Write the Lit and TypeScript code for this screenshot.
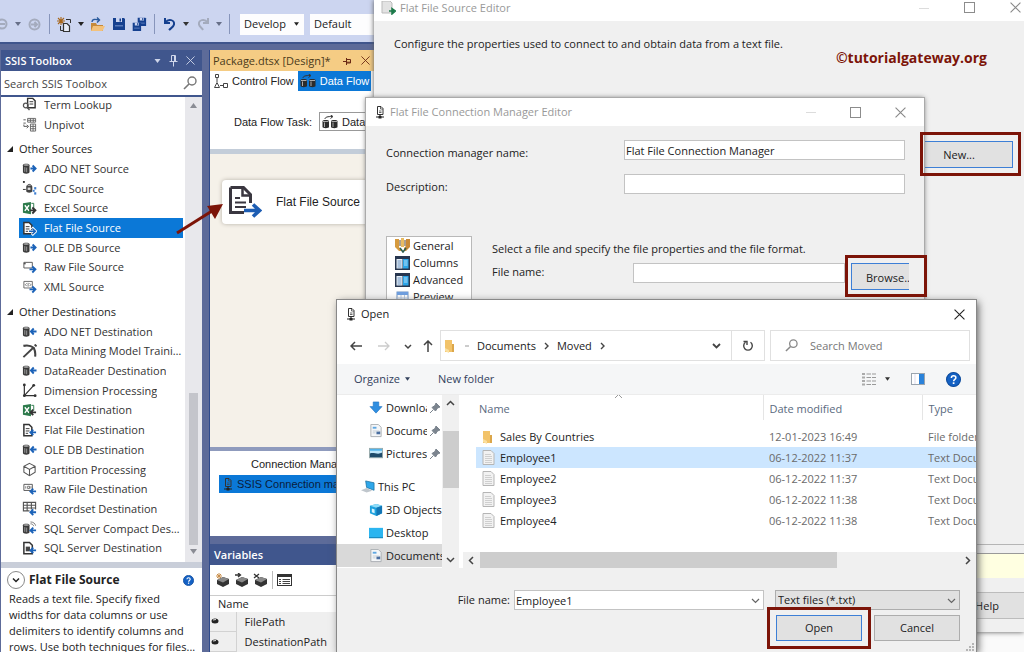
import { LitElement, html, svg, css } from "lit";
import { customElement } from "lit/decorators.js";
import { classMap } from "lit/directives/class-map.js";

const base = css`
  * { box-sizing: border-box; }
  :host {
    box-sizing: border-box;
    display: flex;
    flex-direction: column;
    font-family: "Open Sans", "Noto Sans", sans-serif;
    font-size: 11px;
    line-height: 16px;
    color: #222;
  }
  svg { display: block; flex: none; }
  button, input, select { font: inherit; color: inherit; margin: 0; border-radius: 0; }
  button { padding: 0; border: 0; background: none; }
  input { min-width: 0; padding: 0 1px; border: 1px solid #c3c3c3; background: #fff; outline: 0; }
  p, h1, h2, ul { margin: 0; padding: 0; font: inherit; list-style: none; }
  .push { flex: 1 1 0; min-width: 0; }
  .push-button { border: 1px solid #adadad; background: #e1e1e1; text-align: center; }
  .primary { border-color: #3d7fd6; }
  .controls { display: flex; align-items: center; }
`;

type Art = ReturnType<typeof svg>;
const icon = (w: number, h: number, art: Art | Art[], vw = w, vh = h) =>
  html`<svg width=${w} height=${h} viewBox="0 0 ${vw} ${vh}" fill="none" aria-hidden="true">${art}</svg>`;

/* ---- shared glyphs ---- */
const cross = (color: string, size = 10) =>
  icon(size, size, svg`<path d="M.5 .5L9.5 9.5M9.5 .5L.5 9.5" stroke=${color}/>`, 10, 10);
const square = () => icon(11, 11, svg`<rect x=".5" y=".5" width="10" height="10" stroke="#8c8c8c"/>`);
const dash = () => icon(10, 10, svg`<path d="M0 5.5H10" stroke="#dcdcdc"/>`);
const caret = (color: string, w = 6) => icon(w, 4, svg`<path d="M0 0H6L3 4Z" fill=${color}/>`, 6, 4);
const chevron = (color = "#444", turn = 0, width = 1.2) =>
  icon(9, 9, svg`<path d="M1 3L4.500 6.500L8 3" stroke=${color} stroke-width=${width} transform="rotate(${turn} 4.500 4.500)"/>`);
const lens = (color: string, size = 14) =>
  icon(size, size, svg`<circle cx="9" cy="5" r="4" stroke=${color} stroke-width="1.400"/><path d="M6 8L1 13" stroke=${color} stroke-width="1.600"/>`, 14, 14);
const serverFile = () =>
  icon(10, 13, svg`<path d="M2.500 .5H6L8 2.500V8.500H2.500Z" stroke="#333"/><path d="M5.500 1V3H8M4 5H6.500M4 6.500H6.500" stroke="#444" stroke-width=".8"/><path d="M1 11H9M5 8.500V12" stroke="#222" stroke-width="1.200"/><rect x="3.500" y="10" width="3" height="2.500" fill="#222"/>`);
const helpBadge = (size: number) =>
  html`<svg width=${size} height=${size} viewBox="0 0 14 14" fill="none" aria-hidden="true"><circle cx="7" cy="7" r="6.500" fill="#1461c4" stroke="#0c4a9c"/><path d="M5 5.500C5 2.800 9.200 2.900 9.200 5.400C9.200 7 7.100 6.900 7.100 8.700" stroke="#fff" stroke-width="1.400"/><rect x="6.300" y="9.600" width="1.600" height="1.600" fill="#fff"/></svg>`;

/* ---- toolbox item glyphs, drawn on a 16 unit grid ---- */
const arrowRight = (c: string) => svg`<path d="M8 10H14M11 7L14.300 10L11 13.300" stroke=${c} stroke-width="2"/>`;
const arrowLeft = (c: string) => svg`<path d="M9.500 10H15M12 7L9 10L12 13" stroke=${c} stroke-width="2"/>`;
const dbArrowRight = svg`<path d="M9 8H14M11.300 4.800L14.500 8L11.300 11.200" stroke="#1b62b8" stroke-width="2"/>`;
const dbArrowLeft = svg`<path d="M10 8H15.500M12.500 4.800L9.500 8L12.500 11.200" stroke="#1b62b8" stroke-width="2"/>`;
const drum = svg`<path d="M1 4.500C1 2.500 8 2.500 8 4.500V12C8 14 1 14 1 12Z" fill="#3a3a3a"/><path d="M3 6.500V11.500M5 7V12" stroke="#bbb" stroke-width=".8"/><ellipse cx="4.500" cy="4.300" rx="3" ry="1" fill="#999"/>`;
const page = svg`<path d="M2 1.500H7.500L10.500 4.500V13.500H2Z" fill="#fff" stroke="#333" stroke-width="1.600"/><path d="M4 6H8M4 8.500H8M4 11H6.500" stroke="#333"/>`;
const excel = svg`<path d="M1 2.500L9.500 1V14L1 12.500Z" fill="#2c7a4b"/><path d="M3 4.500L7.500 10.500M7.500 4.500L3 10.500" stroke="#fff" stroke-width="1.500"/><path d="M10 2.500H12.500V8" stroke="#2c7a4b"/>`;
const BLUE = "#1b62b8";
const glyphs: Record<string, Art> = {
  lookup: svg`<path d="M6 1.500H11.500L14 4V11.500H6Z" stroke="#333" stroke-width="1.500"/><path d="M8 5H12M8 7.500H12" stroke="#333"/><circle cx="4" cy="9" r="2.500" stroke="#555" stroke-width="1.300"/><path d="M5.500 11L8 14" stroke="#555" stroke-width="1.500"/>`,
  unpivot: svg`<path d="M6 1.500H14.500V5.500H6ZM9 1.500V5.500M12 1.500V5.500M6 3.500H14.500" stroke="#666"/><path d="M9 7.500H14.500V15H9ZM9 10H14.500M9 12.500H14.500M11.800 7.500V15" stroke="#666"/><path d="M1.500 3H4M1.500 6.500H4M2 8V10H6M5 8.500L7 10L5 12" stroke="#555"/>`,
  dbSource: svg`${drum}${dbArrowRight}`,
  dbDest: svg`${drum}${dbArrowLeft}`,
  cdc: svg`<rect x="1" y="0" width="2" height="2" fill="#333"/><path d="M1 9H4" stroke="#333"/><path d="M5.500 5.500C5.500 3 10 3 10 5.500" stroke="#333"/><path d="M4.500 6C4.500 4.500 11 4.500 11 6V11C11 13 4.500 13 4.500 11Z" fill="#444"/><rect x="6" y="7" width="3" height="2.500" fill="#ddd"/><rect x="13" y="6.500" width="2.200" height="2.500" fill="#3f7fd0"/><rect x="11.500" y="9.500" width="2" height="2" fill="#3f7fd0"/><rect x="13" y="12" width="2.200" height="2.500" fill="#3f7fd0"/>`,
  excelSource: svg`${excel}${arrowRight("#333")}`,
  excelDest: svg`${excel}${arrowLeft("#333")}`,
  fileSource: svg`${page}<path d="M7 11H13M10.500 7L14.500 11L10.500 15" stroke="#fff" stroke-width="3"/><path d="M7.500 11H14M11 8L14.300 11L11 14" stroke=${BLUE} stroke-width="1.500"/>`,
  fileDest: svg`${page}${arrowLeft(BLUE)}`,
  rawSource: svg`<path d="M2 2.500H11V8.500H2Z" stroke="#555"/><path d="M4 4H2" stroke="#222"/>${arrowRight(BLUE)}`,
  rawDest: svg`<path d="M2 2.500H11V9H2Z" stroke="#555"/><path d="M4 4.500V7M6 4.500H8V7H6ZM9.500 4.500V7" stroke="#555" stroke-width=".8"/>${arrowLeft(BLUE)}`,
  xml: svg`<path d="M2 1.500H11V8.500H2Z" stroke="#666"/><path d="M5 3.500L3.500 5L5 6.500M8 3.500L9.500 5L8 6.500M6.500 3V7" stroke="#555" stroke-width=".8"/>${arrowRight(BLUE)}`,
  mining: svg`<path d="M1.500 2C6 1 10 2 12.500 4C14 7 14.500 10 14 13.500" stroke="#444" stroke-width="2.200"/><path d="M12 4L1.500 14" stroke="#444" stroke-width="2"/><path d="M13.500 .5L15.500 2.500" stroke="#444" stroke-width="2"/>`,
  dimension: svg`<path d="M2.500 1V13.500H15M2.500 13.500L12.500 2.500" stroke="#333" stroke-width="1.300"/><circle cx="2.500" cy="2" r="1.500" fill="#333"/><circle cx="12.500" cy="2.500" r="1.500" fill="#333"/><circle cx="14" cy="13.500" r="1.500" fill="#333"/><circle cx="2.500" cy="13.500" r="1.500" fill="#333"/>`,
  partition: svg`<path d="M8 1.500L14 4.500V11L8 14.500L2 11V4.500ZM2 4.500L8 8L14 4.500M8 8V14.500" stroke="#555" stroke-width="1.100"/>`,
  recordset: svg`<path d="M1.500 1.500H14.500V10.500H1.500ZM1.500 4.500H14.500M1.500 7.500H14.500M5.500 1.500V10.500M10 1.500V10.500" stroke="#555" stroke-width="1.200"/><path d="M8 9H16V16H8Z" fill="#fff"/><path d="M9.500 12H15M12 9L9 12L12 15" stroke=${BLUE} stroke-width="2"/>`,
  compact: svg`<path d="M9 1C12 1 14 2.500 14.500 5M9 3C11 3 12 4 12.500 5.500" stroke="#777"/>${drum}${arrowLeft(BLUE)}`,
  sqlDest: svg`<path d="M2 1.500H8L11 4.500V13.500H2Z" fill="#fff" stroke="#333" stroke-width="1.600"/><rect x="4" y="6" width="4.500" height="5" fill="#444"/>${arrowLeft(BLUE)}`,
};

const groups = [
  { title: "", items: [["lookup", "Term Lookup"], ["unpivot", "Unpivot"]] },
  {
    title: "Other Sources",
    items: [["dbSource", "ADO NET Source"], ["cdc", "CDC Source"], ["excelSource", "Excel Source"], ["fileSource", "Flat File Source"],
      ["dbSource", "OLE DB Source"], ["rawSource", "Raw File Source"], ["xml", "XML Source"]],
  },
  {
    title: "Other Destinations",
    items: [["dbDest", "ADO NET Destination"], ["mining", "Data Mining Model Training"], ["dbDest", "DataReader Destination"],
      ["dimension", "Dimension Processing"], ["excelDest", "Excel Destination"], ["fileDest", "Flat File Destination"],
      ["dbDest", "OLE DB Destination"], ["partition", "Partition Processing"], ["rawDest", "Raw File Destination"],
      ["recordset", "Recordset Destination"], ["compact", "SQL Server Compact Destination"], ["sqlDest", "SQL Server Destination"]],
  },
];

@customElement("main-toolbar")
export class MainToolbar extends LitElement {
  static styles = [base, css`
    :host { flex: none; height: 44px; background: #ccd5f0; border-bottom: 2px solid #40568d; padding-top: 6px; }
    .bar { display: flex; align-items: center; height: 36px; overflow: hidden; }
    .tool { display: flex; align-items: center; justify-content: center; flex: none; width: 21px; height: 20px; }
    .narrow { width: 12px; }
    .sep { flex: none; width: 1px; height: 20px; margin: 0 4px; background: #8795bb; }
    .pick { flex: none; width: 64px; height: 21px; border: 0; background: #fdfdfe; appearance: none; padding: 0 0 0 4px; }
    .combo { position: relative; display: flex; align-items: center; margin-left: 6px; }
    .combo svg { position: absolute; right: 5px; }
    .wide .pick { width: 90px; }
    .wide svg { display: none; }
  `];
  render() {
    const floppy = svg`<path d="M1 1H12L13 2V13H1Z" fill="#15408f"/><rect x="4" y="1" width="6" height="4" fill="#ccd5f0"/><rect x="7.500" y="1.500" width="1.500" height="3" fill="#15408f"/><rect x="3" y="8" width="8" height="1.500" fill="#5678b8"/>`;
    return html`<div class="bar" role="toolbar" aria-label="Standard">
      <button class="tool narrow" aria-label="Back">${icon(12, 12, svg`<circle cx="2" cy="6" r="4.500" stroke="#a4abbd" stroke-width="2"/><path d="M0 6H5" stroke="#a4abbd" stroke-width="2"/>`)}</button>
      <button class="tool narrow" aria-label="Back history">${caret("#666f88")}</button>
      <button class="tool" aria-label="Forward">${icon(13, 13, svg`<circle cx="6.500" cy="6.500" r="5" stroke="#a4abbd" stroke-width="2"/><path d="M3 6.500H9M6.500 4L9 6.500L6.500 9" stroke="#a4abbd" stroke-width="2"/>`)}</button>
      <i class="sep"></i>
      <button class="tool" aria-label="New project">${icon(15, 15, svg`<path d="M4 0V8M0 4H8M1 1L7 7M7 1L1 7" stroke="#a8671d" stroke-width="1.100"/><path d="M9 2.500H13.500V6M3.500 9V13.500H6" stroke="#333"/><path d="M6.500 6.500H10L12.500 9V14.500H6.500Z" fill="#e7ecf8" stroke="#333" stroke-width="1.200"/>`)}</button>
      <button class="tool narrow" aria-label="New menu">${caret("#222")}</button>
      <button class="tool" aria-label="Open">${icon(15, 15, svg`<path d="M1 6H6L7 8H13V14H1Z" fill="#c68a3a"/><path d="M3 9H15L12.500 14H1Z" fill="#f3c27c"/><path d="M2 5C2 2 5 2 9 3M7 .5L9.500 3L7 5.500" stroke="#2a5a9c" stroke-width="1.400"/>`)}</button>
      <button class="tool" aria-label="Save">${icon(14, 14, floppy)}</button>
      <button class="tool" aria-label="Save all">${icon(15, 15, svg`<g transform="translate(5 0) scale(.7)">${floppy}</g><g transform="translate(0 5) scale(.7)">${floppy}</g>`)}</button>
      <i class="sep"></i>
      <button class="tool" aria-label="Undo">${icon(14, 14, svg`<path d="M2 1V6H7" stroke="#15408f" stroke-width="2"/><path d="M2.500 5.500C5 1.500 12 2.500 11 7.500C10.500 10 8 11 6 13" stroke="#15408f" stroke-width="2"/>`)}</button>
      <button class="tool narrow" aria-label="Undo history">${caret("#333")}</button>
      <button class="tool" aria-label="Redo">${icon(14, 14, svg`<path d="M12 1V6H7" stroke="#a4abbd" stroke-width="2"/><path d="M11.500 5.500C9 1.500 2 2.500 3 7.500C3.500 10 6 11 7 13" stroke="#a4abbd" stroke-width="2"/>`)}</button>
      <button class="tool narrow" aria-label="Redo history">${caret("#666f88")}</button>
      <i class="sep"></i>
      <span class="combo"><select class="pick" aria-label="Configuration"><option>Develop</option></select>${caret("#222", 5)}</span>
      <span class="combo wide"><select class="pick" aria-label="Platform"><option>Default</option></select>${caret("#222", 5)}</span>
    </div>`;
  }
}

@customElement("toolbox-panel")
export class ToolboxPanel extends LitElement {
  static styles = [base, css`
    :host { flex: none; width: 201px; min-height: 0; background: #fff; }
    .head { display: flex; align-items: center; gap: 8px; flex: none; height: 21px; padding: 0 7px 0 4px; background: #40568d; color: #fff; }
    .head h2 { font-weight: 600; }
    .find { display: flex; align-items: center; flex: none; height: 26px; padding: 0 5px 0 2px; border-bottom: 2px solid #40568d; }
    .find input { border: 0; flex: 1; height: 22px; }
    .find input::placeholder { color: #444; opacity: 1; }
    .body { display: flex; flex: 1; min-height: 0; overflow: hidden; }
    .list { display: flex; flex-direction: column; flex: 1; min-width: 0; margin-top: -2px; padding-bottom: 4px; }
    .item { display: flex; align-items: center; flex: 1 1 0; min-height: 0; margin-left: 18px; padding-left: 2px; gap: 7px; color: #333; }
    .item svg { margin-left: 1px; }
    .item span { min-width: 0; white-space: nowrap; overflow: hidden; text-overflow: ellipsis; }
    .item.selected { background: #0b78d7; color: #fff; }
    .group { display: flex; align-items: center; flex: 1 1 0; min-height: 0; margin-top: 5px; padding-left: 6px; gap: 5px; }
    .scroll { display: flex; flex-direction: column; align-items: center; flex: none; width: 17px; margin-left: 2px; padding: 6px 0 8px; background: #e8e8ec; }
    .track { display: flex; flex-direction: column; justify-content: flex-end; flex: 1; padding: 4px 0; }
    .thumb { width: 9px; height: 35%; background: #c4c5cb; }
    .info { flex: none; height: 90px; overflow: hidden; border-top: 6px solid #c9ced9; padding: 3px 5px 0 6px; }
    .info header { display: flex; align-items: center; gap: 4px; height: 18px; padding-right: 3px; margin-bottom: 2px; }
    .info h2 { font-weight: 700; font-size: 12px; }
    .info p { padding-left: 2px; white-space: pre-line; }
  `];
  render() {
    return html`
      <header class="head"><h2>SSIS Toolbox</h2><span class="push"></span>${caret("#cfd6ea", 7)}
        ${icon(9, 12, svg`<path d="M2.500 .5H6.500V6.500H2.500ZM5.500 1V6M.5 6.500H8.500M4.500 6.500V11.500" stroke="#cfd6ea"/>`)}${cross("#cfd6ea", 9)}</header>
      <div class="find"><input aria-label="Search SSIS Toolbox" placeholder="Search SSIS Toolbox">${lens("#777")}</div>
      <div class="body">
        <div class="list" role="list">
          ${groups.map((g) => html`
            ${g.title ? html`<div class="group">${icon(7, 6, svg`<path d="M6 0V6H0Z" fill="#222"/>`)}<span>${g.title}</span></div>` : ""}
            ${g.items.map(([glyph, name]) => html`<div role="listitem" class=${classMap({ item: true, selected: name === "Flat File Source" })}>${icon(15, 15, glyphs[glyph], 16, 16)}<span>${name}</span></div>`)}`)}
        </div>
        <div class="scroll">${icon(7, 5, svg`<path d="M0 5H7L3.500 0Z" fill="#8a8c94"/>`)}<div class="track"><div class="thumb"></div></div>${icon(7, 5, svg`<path d="M0 0H7L3.500 5Z" fill="#8a8c94"/>`)}</div>
      </div>
      <section class="info">
        <header>${icon(18, 18, svg`<circle cx="9" cy="9" r="8.500" stroke="#888"/><path d="M6 7.500L9 10.500L12 7.500" stroke="#222" stroke-width="1.500"/>`)}<h2>Flat File Source</h2><span class="push"></span>${helpBadge(11)}</header>
        <p>Reads a text file. Specify fixed
widths for data columns or use
delimiters to identify columns and
rows. Use both techniques for files...</p>
      </section>`;
  }
}

const drums = () => icon(16, 14, svg`<path d="M3 4C3 2 6 1.500 10 1.500M8.500 0L11 1.500L8.500 3.500" stroke="#333"/><path d="M.5 6C.5 4.500 7 4.500 7 6V12C7 13.500 .5 13.500 .5 12Z" fill="#2c2c2c"/><path d="M9 6C9 4.500 15.500 4.500 15.500 6V12C15.500 13.500 9 13.500 9 12Z" fill="#2c2c2c"/><path d="M2.500 7.500V12M11 7.500V12M1 6.500H6.500M9.500 6.500H15" stroke="#aaa"/>`);
const cube = (extra: Art) => icon(15, 14, svg`<path d="M2 7L8 4L14 6V11L8 14L2 11Z" fill="#333"/><path d="M2 7L8 9.500L14 6L8 4Z" fill="#8a8a8a"/>${extra}`);

@customElement("designer-area")
export class DesignerArea extends LitElement {
  static styles = [base, css`
    :host { flex: 1; min-width: 0; min-height: 0; border-left: 1px solid #2f4a8c; }
    .tab { display: flex; align-items: center; gap: 10px; flex: none; width: 164px; height: 21px; padding: 0 6px 0 3px; background: #f5cc84; color: #4a3a1a; white-space: nowrap; }
    .tab span { margin-right: 2px; }
    .top { flex: none; height: 78px; background: #fff; font-family: "Liberation Sans", Arial, sans-serif; font-size: 11px; }
    .modes { display: flex; height: 20px; gap: 4px; }
    .mode { display: flex; align-items: center; gap: 4px; padding-left: 3px; }
    .active { width: 73px; gap: 4px; padding-left: 2px; background: #0b78d7; color: #fff; }
    .task { display: flex; align-items: center; gap: 10px; margin-top: 21px; padding-left: 24px; }
    .task select { width: 200px; height: 19px; padding: 0 0 0 22px; appearance: none; border: 1px solid #999; background: #fff; }
    .holder { display: flex; align-items: center; }
    .holder svg { margin-right: -19px; z-index: 1; }
    .canvas { flex: 1; min-height: 0; border-top: 5px solid #c3cdd9; background: #f5f1e9; padding: 26px 0 0 12px; }
    .node { display: flex; align-items: center; gap: 14px; width: 200px; height: 44px; padding-left: 6px; border-radius: 4px; background: #fff; box-shadow: 0 0 4px #b5b0a6; font-family: "Liberation Sans", Arial, sans-serif; font-size: 12px; }
    .managers { flex: none; height: 89px; border-top: 4px solid #8f9bbd; background: #fff; padding-top: 5px; font-family: "Liberation Sans", Arial, sans-serif; }
    .managers h2 { padding-left: 41px; margin-bottom: 3px; }
    .manager { display: flex; align-items: center; gap: 4px; height: 18px; margin-left: 9px; padding-left: 4px; background: #0b78d7; color: #0a1c3c; white-space: nowrap; }
    .vars { flex: none; margin-top: 8px; background: #fff; }
    .vars h2 { height: 21px; line-height: 21px; padding-left: 4px; background: #40568d; color: #fff; font-weight: 600; }
    .tools { display: flex; align-items: center; gap: 4px; height: 30px; padding-left: 5px; }
    .tools i { width: 1px; height: 18px; background: #bbb; }
    table { width: 100%; border-collapse: collapse; border-top: 1px solid #ccc; }
    th { height: 16px; padding: 0 0 0 8px; font-weight: 400; text-align: left; line-height: 15px; }
    td { height: 20px; padding: 0; background: #efefef; line-height: 16px; }
    .mark { width: 26px; padding-left: 1px; border-right: 1px solid #d2d2d2; border-bottom: 1px solid #d2d2d2; }
    .name { padding-left: 8px; }
  `];
  render() {
    const mark = icon(8, 6, svg`<ellipse cx="4" cy="3" rx="3.500" ry="2.500" fill="#222"/><path d="M2 2L5 1.500" stroke="#ddd"/>`);
    return html`
      <div class="tab"><span>Package.dtsx [Design]*</span>
        ${icon(8, 8, svg`<path d="M0 4.500H3M3.500 1V8M3.500 2.500H7.500V6H3.500M3.500 5.200H7.500" stroke="#6b2a14"/>`)}${cross("#6b2a14", 9)}</div>
      <div class="top">
        <div class="modes">
          <button class="mode">${icon(15, 15, svg`<path d="M2.500 .5H5.500V3.500H2.500ZM4 4V8M4 8.500L6.500 13.500H1.500ZM7 11.500H10M10.500 9.500H14.500V13.500H10.500Z" stroke="#444"/>`)}Control Flow</button>
          <button class="mode active">${drums()}Data Flow</button>
        </div>
        <div class="task"><label for="task">Data Flow Task:</label>
          <span class="holder">${drums()}<select id="task"><option>Data Flow Task</option></select></span></div>
      </div>
      <div class="canvas"><div class="node">
        ${icon(34, 34, svg`<path d="M2.500 2.500H15.500L22.500 9.500V18M2.500 2.500V27.500H16" stroke="#3a3740" stroke-width="3"/><path d="M14.500 3V10.500H22" stroke="#3a3740" stroke-width="2.500"/><path d="M7 13H12M7 17.500H18M7 22H18" stroke="#3a3740" stroke-width="2"/><path d="M16 25.500H30M25 19.500L31.500 25.500L25 31.500" stroke="#1d5db3" stroke-width="3.600"/>`)}
        <span>Flat File Source</span></div></div>
      <section class="managers"><h2>Connection Managers</h2><div class="manager">${serverFile()}<span>SSIS Connection manager</span></div></section>
      <section class="vars"><h2>Variables</h2>
        <div class="tools">
          ${cube(svg`<path d="M4 0V6M1 3H7M2 1L6 5M6 1L2 5" stroke="#c98e4a"/>`)}
          ${cube(svg`<path d="M1 2H6M4 0L6.500 2L4 4" stroke="#333" stroke-width="1.300"/>`)}
          ${cube(svg`<path d="M1 1L6 5M6 1L1 5" stroke="#333" stroke-width="1.300"/>`)}
          <i></i>${icon(15, 14, svg`<rect x=".5" y="1.500" width="14" height="11" stroke="#333"/><path d="M0 3H15" stroke="#333" stroke-width="2"/><path d="M2 6.500H4M5.500 6.500H13M2 8.500H4M5.500 8.500H13M2 10.500H4M5.500 10.500H13" stroke="#444"/>`)}
        </div>
        <table>
          <thead><tr><th colspan="2">Name</th></tr></thead>
          <tbody>${["FilePath", "DestinationPath"].map((n) => html`<tr><td class="mark">${mark}</td><td class="name">${n}</td></tr>`)}</tbody>
        </table></section>`;
  }
}

@customElement("source-editor")
export class SourceEditor extends LitElement {
  static styles = [base, css`
    :host { background: #f0f0f0; box-shadow: 0 0 5px #555; }
    .title { display: flex; align-items: center; flex: none; height: 21px; padding: 0 3px 6px 7px; gap: 4px; background: #fff; color: #999; }
    .controls { gap: 35px; }
    .intro { padding: 15px 20px 0; }
    .credit { align-self: flex-end; margin-top: -4px; padding-right: 37px; font-size: 14px; line-height: 20px; font-weight: 700; color: #7c1408; }
    .new { align-self: flex-end; width: 108px; height: 27px; margin: 73px 11px 0 0; }
    .hint { flex: none; height: 25px; margin-top: 8px; border-top: 1px solid #999; background: #ffffe1; }
    .edge { border-top: 1px solid #b5b5b5; }
    .foot { display: flex; justify-content: flex-end; padding: 14px 0 13px; }
    .foot .push-button { width: 90px; height: 27px; margin-right: -8px; border-color: #bcbcbc; }
  `];
  render() {
    return html`
      <header class="title">${icon(15, 14, svg`<path d="M1 0H9L11 2V12H1Z" fill="#e3e3e3" stroke="#bbb"/><path d="M8 10H12M11 7.500L14.500 10L11 13Z" fill="#1c7a4a" stroke="#1c7a4a" stroke-width="1.500"/>`)}
        <h1>Flat File Source Editor</h1><span class="push"></span>
        <div class="controls">${dash()}${square()}${cross("#888", 11)}</div></header>
      <p class="intro">Configure the properties used to connect to and obtain data from a text file.</p>
      <p class="credit">©tutorialgateway.org</p>
      <button class="push-button primary new">New...</button>
      <span class="push"></span>
      <div class="edge"></div><div class="hint"></div>
      <footer class="foot"><button class="push-button">Help</button></footer>`;
  }
}

@customElement("connection-editor")
export class ConnectionEditor extends LitElement {
  static styles = [base, css`
    :host { background: #f0f0f0; box-shadow: 0 0 5px #666; outline: 1px solid #aaa; }
    .title { display: flex; align-items: center; flex: none; height: 28px; padding: 0 18px 0 9px; gap: 5px; background: #fff; color: #999; }
    .controls { gap: 34px; }
    .row { display: flex; align-items: center; padding: 0 19px 0 20px; height: 20px; margin-top: 14px; }
    .row label { flex: 1; padding-top: 6px; }
    .row input { width: 281px; height: 20px; }
    .split { display: flex; gap: 20px; flex: 1; margin-top: 42px; padding: 0 15px 0 20px; }
    .pages { width: 86px; padding: 0 0 0 8px; border: 1px solid #b9b9b9; background: #fff; }
    .pages li { display: flex; align-items: center; gap: 3px; height: 17px; }
    .form { flex: 1; min-width: 0; padding-top: 5px; }
    .pick { display: flex; align-items: flex-start; height: 27px; margin-top: 6px; }
    .pick label { flex: none; width: 141px; padding-top: 1px; }
    .pick input { flex: 1; height: 20px; }
    .browse { width: 58px; height: 27px; margin-left: 6px; padding: 2px 0 0 14px; border-right: 0; text-align: left; overflow: hidden; white-space: nowrap; }
  `];
  render() {
    const grid = () => icon(15, 14, svg`<rect width="15" height="14" fill="#27364f"/><rect x="1.500" y="3" width="6" height="9.500" fill="#e8f0f8"/><rect x="8" y="3" width="5.500" height="9.500" fill="#2aa4e8"/><path d="M2.500 5H6.500M2.500 7H6.500M2.500 9H6.500M2.500 11H6.500" stroke="#4a7ab0" stroke-width=".8"/><path d="M9 5H12.500M9 7H12.500M9 9H12.500" stroke="#d8f0ff" stroke-width=".8"/>`);
    const general = icon(15, 15, svg`<path d="M0 1H4V9L7 13H4L0 9Z" fill="#d69a3e"/><path d="M6 0H9V9H6Z" fill="#e8bb62"/><path d="M11 1H15V9L11 13H9V10L11 8Z" fill="#c98a38"/><path d="M5 10L8 14L11 10" stroke="#2c5c4c" stroke-width="1.600"/><path d="M5 2V8M10 2V8" stroke="#5a4326"/>`);
    const preview = icon(15, 14, svg`<rect x="2" y="2" width="11" height="12" fill="#fff" stroke="#6f93c4"/><rect x="2" y="2" width="11" height="3" fill="#6f9fe0"/><path d="M6 5V14M9.500 5V14M2 8H13M2 11H13" stroke="#b8cbe4"/>`);
    return html`
      <header class="title">${serverFile()}<h1>Flat File Connection Manager Editor</h1><span class="push"></span>
        <div class="controls">${dash()}${square()}${cross("#888", 11)}</div></header>
      <div class="row"><label for="cm">Connection manager name:</label><input id="cm" .value=${"Flat File Connection Manager"}></div>
      <div class="row"><label for="desc">Description:</label><input id="desc"></div>
      <div class="split">
        <ul class="pages"><li>${general}General</li><li>${grid()}Columns</li><li>${grid()}Advanced</li><li>${preview}Preview</li></ul>
        <div class="form">
          <p>Select a file and specify the file properties and the file format.</p>
          <div class="pick"><label for="fn">File name:</label><input id="fn"><button class="push-button primary browse">Browse...</button></div>
        </div>
      </div>`;
  }
}

const docIcon = () => icon(13, 15, svg`<path d="M1 .5H9L12 3.500V14.500H1Z" fill="#f2f2f2" stroke="#b5b5b5"/><path d="M3 4.500H9M3 6.500H10M3 8.500H10M3 10.500H10M3 12.500H10" stroke="#cfcfcf"/>`);
const folderIcon = () => icon(13, 14, svg`<path d="M1 1H8V5H10V13H1Z" fill="#f2c36a"/><path d="M1 9L5 11V14L1 12Z" fill="#fadf9f"/><path d="M8 5H10V13H8Z" fill="#dba64a"/>`);
const nav: Record<string, Art> = {
  down: svg`<path d="M4.500 1H10.500V6H14L7.500 13L1 6H4.500Z" fill="#2f8ee0" stroke="#1b6fc0" stroke-width=".6"/>`,
  docs: svg`<path d="M2 .5H10L13 3.500V13.500H2Z" fill="#f4f6f8" stroke="#a9adb2"/><rect x="4" y="3" width="4" height="2" fill="#5ea7e2"/><rect x="8" y="8" width="4" height="3" fill="#4a6ea0"/><path d="M4 7.500H11M4 9.500H7" stroke="#c2cbd5"/>`,
  pics: svg`<rect x=".5" y="1.500" width="14" height="10" fill="#bfe6fa" stroke="#9aa"/><path d="M1 7C5 5 9 9 14 6V11H1Z" fill="#1e4a6a"/><rect x="1" y="2" width="13" height="2" fill="#53b3ea"/>`,
  pc: svg`<path d="M5 1L14 3V11L6 8Z" fill="#2ea7ea" stroke="#1b6f9e" stroke-width=".8"/><path d="M0 11L6 8.500L12 11.500L6 13.500Z" fill="#bfc6cc"/>`,
  cube: svg`<path d="M1 3L8 1L14 3V11L8 14L1 11Z" fill="#1fa2de"/><path d="M1 3L8 5L14 3L8 1Z" fill="#8fdcf8"/><path d="M8 5V14L14 11V3Z" fill="#1275b5"/><path d="M3 6L6 7V11L3 10Z" fill="#d8f4ff"/>`,
  desktop: svg`<rect x="0" y="2" width="15" height="11" fill="#2bb5f0"/><path d="M0 12.500H15" stroke="#1580b5"/>`,
};
const files = [
  ["Sales By Countries", "12-01-2023 16:49", "File folder"],
  ["Employee1", "06-12-2022 11:37", "Text Document"],
  ["Employee2", "06-12-2022 11:37", "Text Document"],
  ["Employee3", "06-12-2022 11:38", "Text Document"],
  ["Employee4", "06-12-2022 11:38", "Text Document"],
];

@customElement("open-dialog")
export class OpenDialog extends LitElement {
  static styles = [base, css`
    :host { background: #fff; box-shadow: 2px 2px 8px #555; outline: 1px solid #888; overflow: hidden; }
    .title { display: flex; align-items: center; flex: none; height: 30px; padding: 0 11px 2px 9px; gap: 5px; }
    .nav { display: flex; align-items: center; flex: none; height: 31px; padding: 0 6px 0 13px; }
    .arrows { display: flex; align-items: center; width: 90px; gap: 16px; }
    .arrows svg + svg + svg { margin-left: -2px; }
    .arrows svg + svg + svg + svg { margin-left: -5px; }
    .address { display: flex; align-items: center; flex: 1; height: 31px; border: 1px solid #e0e0e0; gap: 8px; padding-left: 3px; }
    .refresh { display: flex; align-items: center; justify-content: center; width: 33px; height: 29px; border-left: 1px solid #e0e0e0; margin-left: 2px; }
    .search { display: flex; align-items: center; width: 200px; height: 31px; margin-left: 5px; padding-left: 14px; gap: 11px; border: 1px solid #e0e0e0; }
    .search input { border: 0; flex: 1; }
    .search input::placeholder { color: #777; opacity: 1; }
    .cmds { display: flex; align-items: center; flex: none; height: 31px; margin-top: 3px; padding: 0 15px 0 17px; background: #f5f6f7; border-bottom: 1px solid #ececec; color: #33415c; }
    .cmds button { display: flex; align-items: center; gap: 5px; margin-right: 28px; }
    .views { display: flex; align-items: center; gap: 9px; }
    .views svg:nth-child(3) { margin: 0 12px; }
    .body { display: flex; flex: none; height: 173px; }
    .places { width: 105px; flex: none; overflow: hidden; }
    .places li { display: flex; align-items: center; height: 23px; padding-left: 32px; gap: 3px; white-space: nowrap; }
    .places li:first-child { margin-top: 1px; }
    .places .pc { margin-top: 10px; padding-left: 24px; }
    .places .here { background: #d9d9d9; }
    .places .pin { width: 41px; overflow: hidden; }
    .vscroll { display: flex; flex-direction: column; align-items: center; flex: none; width: 17px; margin-right: 4px; padding: 4px 0; background: #f0f0f0; }
    .vthumb { width: 16px; height: 57px; margin: 23px 0 auto; background: #cdcdcd; }
    .files { display: flex; flex-direction: column; flex: 1; min-width: 0; }
    .scroller { flex: 1; overflow: hidden; padding-left: 13px; }
    table { width: 560px; table-layout: fixed; border-collapse: collapse; }
    th { position: relative; height: 25px; padding: 2px 0 0 6px; text-align: left; font-weight: 400; color: #5a6a80; border-right: 1px solid #e5e5e5; }
    .sort { position: absolute; left: 138px; top: -3px; }
    th:first-child { width: 287px; padding-left: 3px; }
    th:nth-child(2) { width: 159px; }
    .space { height: 6px; }
    td { height: 21px; padding: 0 0 0 6px; color: #6a6a6a; }
    .file { display: flex; align-items: center; gap: 5px; color: #222; }
    .selected td { background: #cce6ff; }
    .hscroll { display: flex; align-items: center; flex: none; height: 16px; padding: 0 4px; gap: 4px; background: #f0f0f0; }
    .hthumb { flex: 0 0 357px; height: 16px; background: #cdcdcd; margin-right: auto; }
    .foot { flex: 1; padding: 22px 16px 0 17px; background: #f0f0f0; }
    .line { display: flex; align-items: center; justify-content: flex-end; gap: 11px; margin-bottom: 5px; }
    .line label { margin-right: -7px; }
    .combo { position: relative; display: flex; align-items: center; width: 250px; }
    .combo input, .combo select { width: 100%; height: 20px; }
    .combo select { padding: 0 2px; appearance: none; border: 1px solid #adadad; background: #e1e1e1; }
    .combo svg { position: absolute; right: 4px; }
    .kind { width: 185px; }
    .line .push-button { width: 86px; height: 26px; }
    .line .primary { margin-right: 1px; }
    .grip { position: absolute; right: 2px; bottom: 1px; }
  `];
  render() {
    const pin = icon(10, 10, svg`<path d="M6 0L10 4L7.500 5L5.500 8L2 4.500L5 2.500ZM3.500 6.500L0 10" fill="#7b848e" stroke="#7b848e"/>`);
    const place = (glyph: string, name: string, cls = "", pinned = false) =>
      html`<li class=${cls}>${icon(14, 14, nav[glyph], 15, 15)}<span class=${pinned ? "pin" : ""}>${name}</span>${pinned ? pin : ""}</li>`;
    return html`
      <header class="title">${serverFile()}<h1>Open</h1><span class="push"></span>${cross("#222", 11)}</header>
      <div class="nav">
        <div class="arrows">
          ${icon(12, 10, svg`<path d="M1 5H12M5 1L1 5L5 9" stroke="#444" stroke-width="1.500"/>`)}
          ${icon(12, 10, svg`<path d="M0 5H11M7 1L11 5L7 9" stroke="#ccc" stroke-width="1.300"/>`)}
          ${icon(8, 8, svg`<path d="M1 3L4 6L7 3" stroke="#444" stroke-width="1.500"/>`)}
          ${icon(10, 12, svg`<path d="M5 12V1M1 5L5 1L9 5" stroke="#444" stroke-width="1.500"/>`)}
        </div>
        <div class="address">${folderIcon()}${icon(4, 2, svg`<path d="M0 1H4" stroke="#999"/>`)}<span>Documents</span>${icon(5, 8, svg`<path d="M1 1L4 4L1 7" stroke="#444" stroke-width="1.400"/>`)}<span>Moved</span>${icon(5, 8, svg`<path d="M1 1L4 4L1 7" stroke="#444" stroke-width="1.400"/>`)}<span class="push"></span>${chevron("#444", 0, 1.8)}
          <button class="refresh" aria-label="Refresh">${icon(12, 12, svg`<path d="M3.500 2.300A4.300 4.300 0 1 0 8.500 2.300" stroke="#444" stroke-width="1.400"/><path d="M1.500 1.500H5V5" stroke="#444" stroke-width="1.400"/>`)}</button></div>
        <div class="search">${lens("#888", 13)}<input aria-label="Search Moved" placeholder="Search Moved"></div>
      </div>
      <div class="cmds"><button>Organize ${caret("#33415c", 5)}</button><button>New folder</button><span class="push"></span>
        <div class="views">
          ${icon(14, 13, svg`<path d="M1.500 0V13" stroke="#aaa" stroke-width="3" stroke-dasharray="2 1.500"/><path d="M4.500 1H9M10 1H14M4.500 4.500H9M10 4.500H14M4.500 8H9M10 8H14M4.500 11.500H9M10 11.500H14" stroke="#999"/>`)}${caret("#333", 5)}
          ${icon(14, 12, svg`<rect x=".5" y=".5" width="13" height="11" fill="#fff" stroke="#9aa4ae"/><rect x="8" y="1" width="5" height="10" fill="#2a82da"/><path d="M4 1V11" stroke="#dde"/>`)}${helpBadge(15)}
        </div></div>
      <div class="body">
        <ul class="places">
          ${place("down", "Downloads", "", true)}${place("docs", "Documents", "", true)}${place("pics", "Pictures", "", true)}
          ${place("pc", "This PC", "pc")}${place("cube", "3D Objects")}${place("desktop", "Desktop")}${place("docs", "Documents", "here")}
        </ul>
        <div class="vscroll">${chevron("#444", 180, 1.5)}<div class="vthumb"></div>${chevron("#444", 0, 1.5)}</div>
        <div class="files">
          <div class="scroller"><table>
            <thead><tr><th>Name<span class="sort">${chevron("#999", 180, 1)}</span></th><th>Date modified</th><th>Type</th></tr><tr class="space"></tr></thead>
            <tbody>${files.map(([name, date, type], i) => html`<tr class=${classMap({ selected: name === "Employee1" })}>
              <td><div class="file">${i ? docIcon() : folderIcon()}<span>${name}</span></div></td><td>${date}</td><td>${type}</td></tr>`)}</tbody>
          </table></div>
          <div class="hscroll">${chevron("#444", 90, 1.5)}<div class="hthumb"></div>${chevron("#444", -90, 1.5)}</div>
        </div>
      </div>
      <div class="foot">
        <div class="line"><label for="file">File name:</label>
          <span class="combo"><input id="file" .value=${"Employee1"}>${chevron("#666")}</span>
          <span class="combo kind"><select aria-label="File type"><option>Text files (*.txt)</option></select>${chevron("#666")}</span></div>
        <div class="line"><button class="push-button primary">Open</button><button class="push-button">Cancel</button></div>
      </div>
      <span class="grip">${icon(8, 8, svg`<path d="M6 0H8V2H6ZM3 3H5V5H3ZM6 3H8V5H6ZM0 6H2V8H0ZM3 6H5V8H3ZM6 6H8V8H6Z" fill="#b5b5b5"/>`)}</span>`;
  }
}

@customElement("app-root")
export class AppRoot extends LitElement {
  static styles = css`
    * { box-sizing: border-box; }
    :host { display: block; position: relative; height: 100vh; overflow: hidden; background: #5d6b99; }
    .ide { display: flex; flex-direction: column; height: 100%; }
    .work { display: flex; flex: 1; min-height: 0; gap: 7px; padding: 6px 0 0 1px; }
    .window { position: absolute; }
    .source { left: 374px; right: 0; top: 0; bottom: 20px; }
    .desk { position: absolute; left: 374px; right: 0; bottom: 0; height: 20px; background: #fafafa; }
    .connection { left: 366px; right: 100px; top: 98px; height: 240px; }
    .open { left: 337px; right: 48px; top: 300px; bottom: 0; }
    .ring { position: absolute; border: 3px solid #7c1408; }
    .ring-new { right: 3px; top: 132px; width: 101px; height: 44px; }
    .ring-browse { right: 97px; top: 255px; width: 82px; height: 42px; }
    .ring-open { right: 153px; bottom: 3px; width: 104px; height: 42px; }
    .arrow { position: absolute; left: 176px; top: 200px; }
  `;
  render() {
    return html`
      <div class="ide"><main-toolbar></main-toolbar>
        <div class="work"><toolbox-panel></toolbox-panel><designer-area></designer-area></div></div>
      <div class="desk"></div>
      <source-editor class="window source"></source-editor>
      <connection-editor class="window connection"></connection-editor>
      <open-dialog class="window open"></open-dialog>
      <div class="ring ring-new"></div>
      <div class="ring ring-browse"></div>
      <div class="ring ring-open"></div>
      <svg class="arrow" width="48" height="36" viewBox="0 0 48 36" aria-hidden="true"><path d="M1 33L36 11" stroke="#7c1408" stroke-width="3"/><path d="M47 4L31 6L39 19Z" fill="#7c1408"/></svg>`;
  }
}
